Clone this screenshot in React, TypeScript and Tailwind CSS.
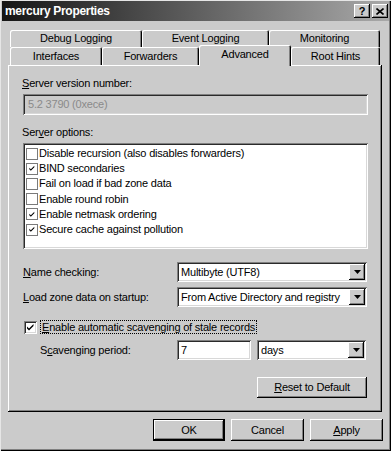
import React from 'react';

const raised = 'shadow-[inset_-1px_-1px_0_#000,inset_1px_1px_0_#fff,inset_-2px_-2px_0_#808080]';
const sunken = 'shadow-[inset_1px_1px_0_#808080,inset_-1px_-1px_0_#fff,inset_2px_2px_0_#2a2a2a,inset_-2px_-2px_0_#d8d8d8]';
const tabEdge = 'shadow-[inset_1px_1px_0_#fff,inset_-1px_0_0_#000,inset_-2px_0_0_#808080]';

const OPTIONS: [string, boolean][] = [
  ['Disable recursion (also disables forwarders)', false],
  ['BIND secondaries', true],
  ['Fail on load if bad zone data', false],
  ['Enable round robin', false],
  ['Enable netmask ordering', true],
  ['Secure cache against pollution', true],
];

function Tick() {
  return (
    <svg width="13" height="13" viewBox="0 0 13 13" className="block">
      <path d="M3 5.5 L5 7.5 L9.5 3 L9.5 5 L5 9.5 L3 7.5 Z" fill="#000" />
    </svg>
  );
}

function U({ children }: { children: React.ReactNode }) {
  return <span className="underline underline-offset-[1px]">{children}</span>;
}

function Arrow() {
  return (
    <div className={`w-[16px] h-[16px] mr-[2px] flex items-center justify-center bg-[#cbcbcb] ${raised}`}>
      <svg width="7" height="4" viewBox="0 0 7 4" className="block">
        <path d="M0 0 H7 L3.5 4 Z" fill="#000" />
      </svg>
    </div>
  );
}

function Combo({ value, className }: { value: string; className: string }) {
  return (
    <div className={`flex items-center justify-between h-[20px] bg-white ${sunken} ${className}`}>
      <span className="pl-[4px] whitespace-nowrap">{value}</span>
      <Arrow />
    </div>
  );
}

function Tab({ label, w }: { label: string; w: string }) {
  return (
    <div className={`${w} h-full flex items-center justify-center rounded-t-[2px] bg-[#cbcbcb] ${tabEdge}`}>
      {label}
    </div>
  );
}

function Btn({ children, def, className }: { children: React.ReactNode; def?: boolean; className: string }) {
  return (
    <div className={`${className} ${def ? 'border border-black' : ''}`}>
      <div className={`w-full h-full flex items-center justify-center bg-[#cbcbcb] ${raised}`}>{children}</div>
    </div>
  );
}

export default function App() {
  return (
    <div className="w-[391px] h-[451px] bg-[#cbcbcb] font-['Liberation_Sans',Arial,sans-serif] text-[11px] tracking-[-0.2px] leading-[13px] text-black shadow-[inset_1px_1px_0_#e6e6e6,inset_-1px_-1px_0_#000,inset_-2px_-2px_0_#808080] px-[2px] pt-[1px] overflow-hidden">
      {/* title bar */}
      <div className="h-[20px] flex items-center justify-between bg-[linear-gradient(90deg,#151515,#a9a9a9)] pl-[3px] pr-[1px]">
        <span className="text-white font-bold text-[12px] tracking-[-0.3px]">mercury Properties</span>
        <div className="flex gap-[2px]">
          <div className={`w-[16px] h-[14px] flex items-center justify-center bg-[#cbcbcb] font-bold text-[11px] ${raised}`}>?</div>
          <div className={`w-[16px] h-[14px] flex items-center justify-center bg-[#cbcbcb] ${raised}`}>
            <svg width="8" height="7" viewBox="0 0 8 7" className="block">
              <path d="M0.5 0.5 L7.5 6.5 M7.5 0.5 L0.5 6.5" stroke="#000" strokeWidth="1.6" />
            </svg>
          </div>
        </div>
      </div>

      {/* tabs */}
      <div className="ml-[8px] mt-[9px] w-[370px]">
        <div className="flex h-[17px]">
          <Tab label="Debug Logging" w="w-[132px]" />
          <Tab label="Event Logging" w="w-[127px]" />
          <Tab label="Monitoring" w="w-[111px]" />
        </div>
        <div className="flex h-[18px]">
          <Tab label="Interfaces" w="w-[92px]" />
          <Tab label="Forwarders" w="w-[97px]" />
          <div className="relative -top-[2px] z-10 w-[92px] h-[21px] flex items-start justify-center pt-[3px] bg-[#cbcbcb] rounded-t-[2px] shadow-[inset_1px_1px_0_#fff,inset_-1px_0_0_#000,inset_-2px_0_0_#808080]">
            Advanced
          </div>
          <Tab label="Root Hints" w="w-[89px]" />
        </div>
      </div>

      {/* panel */}
      <div className={`ml-[6px] w-[374px] h-[347px] flex flex-col pl-[14px] pr-[14px] pt-[12px] ${raised}`}>
        <div><U>S</U>erver version number:</div>
        <div className={`mt-[4px] ml-[1px] h-[21px] flex items-center pl-[5px] text-[#8a8a8a] ${sunken}`}>5.2 3790 (0xece)</div>

        <div className="mt-[11px]">Ser<U>v</U>er options:</div>
        <div className={`mt-[4px] ml-[1px] h-[106px] bg-white pt-[3px] pl-[3px] ${sunken}`}>
          {OPTIONS.map(([label, on]) => (
            <div key={label} className="h-[15.2px] flex items-center">
              <div className="w-[12px] h-[12px] border border-[#7a7a7a] bg-white flex items-center justify-center overflow-hidden">
                {on && <Tick />}
              </div>
              <span className="ml-[1px] whitespace-nowrap">{label}</span>
            </div>
          ))}
        </div>

        <div className="mt-[13px] flex items-center justify-between h-[20px]">
          <span className="ml-[1px]"><U>N</U>ame checking:</span>
          <Combo value="Multibyte (UTF8)" className="w-[190px] mr-[1px]" />
        </div>
        <div className="mt-[5px] flex items-center justify-between h-[20px]">
          <span className="ml-[1px]"><U>L</U>oad zone data on startup:</span>
          <Combo value="From Active Directory and registry" className="w-[190px] mr-[1px]" />
        </div>

        <div className="mt-[13px] flex items-center h-[14px] ml-[2px]">
          <div className={`w-[13px] h-[13px] bg-white ${sunken}`}>
            <Tick />
          </div>
          <span className="ml-[3px] border border-dotted border-black px-[1px] leading-[12px]">
            <U>E</U>nable automatic scavenging of stale records
          </span>
        </div>

        <div className="mt-[6px] flex items-center h-[20px]">
          <span className="ml-[18px] w-[137px]">S<U>c</U>avenging period:</span>
          <div className={`w-[74px] h-[20px] bg-white flex items-center pl-[4px] ${sunken}`}>7</div>
          <Combo value="days" className="ml-[6px] w-[109px]" />
        </div>

        <div className="mt-[17px] flex justify-end">
          <Btn className="w-[110px] h-[21px] mr-[1px]"><U>R</U>eset to Default</Btn>
        </div>
      </div>

      {/* bottom buttons */}
      <div className="mt-[7px] ml-[151px] flex gap-[6px]">
        <Btn def className="w-[72px] h-[22px]">OK</Btn>
        <Btn className="w-[73px] h-[22px]">Cancel</Btn>
        <Btn className="w-[73px] h-[22px]"><U>A</U>pply</Btn>
      </div>
    </div>
  );
}
